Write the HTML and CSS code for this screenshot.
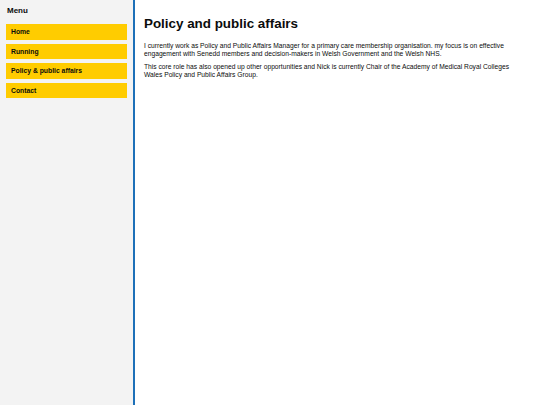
FILE: index.html
```html
<!DOCTYPE html>
<html lang="en">
<head>
<meta charset="utf-8">
<title>Policy and public affairs</title>
<link rel="stylesheet" href="styles.css">
</head>
<body>
<div class="layout">
  <nav class="sidebar">
    <h2 class="menu-title">Menu</h2>
    <ul class="menu">
      <li><a class="menu-link" href="#">Home</a></li>
      <li><a class="menu-link" href="#">Running</a></li>
      <li><a class="menu-link" href="#">Policy &amp; public affairs</a></li>
      <li><a class="menu-link" href="#">Contact</a></li>
    </ul>
  </nav>
  <main class="content">
    <h1 class="page-title">Policy and public affairs</h1>
    <p class="text">I currently work as Policy and Public Affairs Manager for a primary care membership organisation. my focus is on effective engagement with Senedd members and decision-makers in Welsh Government and the Welsh NHS.</p>
    <p class="text">This core role has also opened up other opportunities and Nick is currently Chair of the Academy of Medical Royal Colleges Wales Policy and Public Affairs Group.</p>
  </main>
</div>
</body>
</html>
```

FILE: styles.css
```css
html, body {
  margin: 0;
  padding: 0;
  height: 100%;
}
body {
  font-family: "Liberation Sans", Arial, sans-serif;
  color: #0b0c0c;
  background: #ffffff;
}
.layout {
  display: flex;
  min-height: 100vh;
}
.sidebar {
  width: 121px;
  flex: 0 0 auto;
  background: #f3f3f3;
  border-right: 2px solid #1d70b8;
  padding: 6px 6px;
}
.menu-title {
  margin: 0 0 9px 1px;
  font-size: 8px;
  line-height: 9px;
  font-weight: bold;
}
.menu {
  list-style: none;
  margin: 0;
  padding: 0;
  display: flex;
  flex-direction: column;
  gap: 4px;
}
.menu-link {
  display: block;
  background: #ffcc00;
  color: #0b0c0c;
  text-decoration: none;
  font-weight: bold;
  font-size: 6.8px;
  line-height: 15.5px;
  height: 15.5px;
  padding: 0 5px;
}
.content {
  flex: 1;
  padding: 16px 20px 0 9px;
}
.page-title {
  margin: 0 0 10px;
  font-size: 13.4px;
  line-height: 16px;
  font-weight: bold;
}
.text {
  margin: 0 0 5px;
  font-size: 6.7px;
  line-height: 8px;
}
```
